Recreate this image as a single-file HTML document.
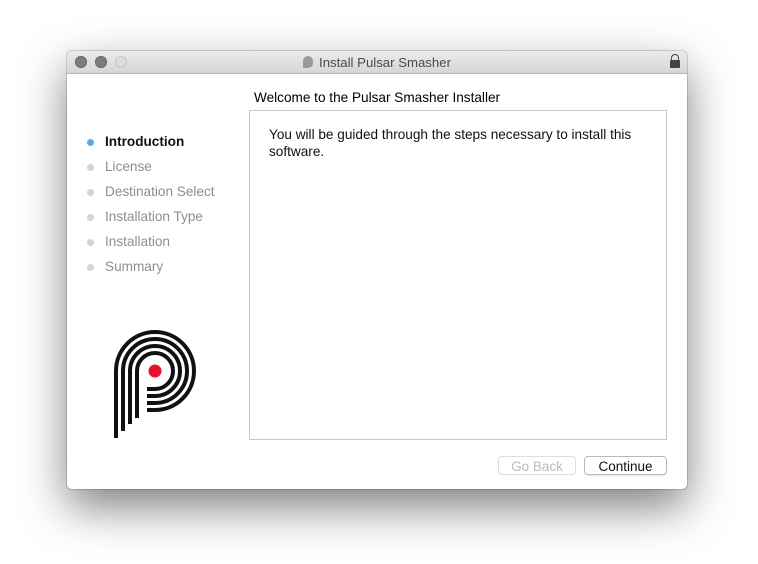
<!DOCTYPE html>
<html><head><style>
body{margin:0;width:758px;height:564px;background:#fff;position:relative;overflow:hidden;font-family:"Liberation Sans",sans-serif;}
.win{position:absolute;left:67px;top:51px;width:620px;height:438px;background:#fff;border-radius:5px;box-shadow:0 18px 45px rgba(0,0,0,.5),0 0 0 1px rgba(0,0,0,.15);overflow:hidden}
.tb{height:22px;background:linear-gradient(#ebebeb,#d6d6d6);border-bottom:1px solid #b5b5b5;position:relative}
.dot{position:absolute;top:5px;width:12px;height:12px;border-radius:50%;background:#7d7d7d;box-shadow:inset 0 0 0 1px #6a6a6a}
.t{position:absolute;left:0;right:0;top:4px;text-align:center;font-size:13.2px;color:#4a4a4a}
.a{position:absolute;font-size:13.6px;}
.nav div{position:absolute;left:38px;font-size:13.6px;color:#8e8e8e}
.nav div::before{content:"";position:absolute;left:-18px;top:5px;width:7px;height:7px;border-radius:50%;background:#d4d4d4}
.btn{position:absolute;height:19px;border-radius:4px;font-size:13.5px;text-align:center;line-height:19px;box-sizing:border-box}
</style></head><body>
<div class="win">
<div class="tb">
<div class="dot" style="left:8px"></div><div class="dot" style="left:28px"></div>
<div class="dot" style="left:48px;background:#dcdcdc;box-shadow:inset 0 0 0 1px #c4c4c4"></div>
<div class="t"><span style="display:inline-block;width:10px;height:12px;background:#999;border-radius:6px 6px 6px 0;vertical-align:-1px;margin-right:6px"></span>Install Pulsar Smasher</div>
<div style="position:absolute;right:7px;top:9px;width:10px;height:8px;background:#444;border-radius:1px"></div>
<div style="position:absolute;right:8px;top:3px;width:6px;height:7px;border:1.5px solid #444;border-bottom:none;border-radius:4px 4px 0 0"></div>
</div>
<div class="a" style="left:187px;top:39px;color:#000">Welcome to the Pulsar Smasher Installer</div>
<div style="position:absolute;left:182px;top:59px;width:418px;height:330px;border:1px solid #c8c8c8;box-sizing:border-box"></div>
<div class="a" style="left:202px;top:75px;width:390px;line-height:17px;color:#111">You will be guided through the steps necessary to install this software.</div>
<div class="nav">
<div style="top:83px;color:#111;font-weight:bold">Introduction</div>
<div style="top:108px">License</div>
<div style="top:133px">Destination Select</div>
<div style="top:158px">Installation Type</div>
<div style="top:183px">Installation</div>
<div style="top:208px">Summary</div>
</div>
<style>.nav div:first-child::before{background:#5fa8e6}</style>
<svg style="position:absolute;left:0;top:0" width="620" height="438">
<g fill="none" stroke="#111" stroke-width="4" transform="translate(-67,-51)">
<path d="M116,438 L116,371 A39,39 0 1 1 155,410 L147,410"/>
<path d="M123,431 L123,371 A32,32 0 1 1 155,403 L147,403"/>
<path d="M130,424 L130,371 A25,25 0 1 1 155,396 L147,396"/>
<path d="M137,418 L137,371 A18,18 0 1 1 155,389 L147,389"/>
</g>
<circle cx="88" cy="320" r="6.5" fill="#e8112d"/>
</svg>
<div class="btn" style="left:431px;top:405px;width:78px;border:1px solid #ddd;color:#bbb">Go Back</div>
<div class="btn" style="left:517px;top:405px;width:83px;border:1px solid #b8b8b8;color:#111;box-shadow:0 1px 0 rgba(0,0,0,.08)">Continue</div>
</div>
</body></html>
